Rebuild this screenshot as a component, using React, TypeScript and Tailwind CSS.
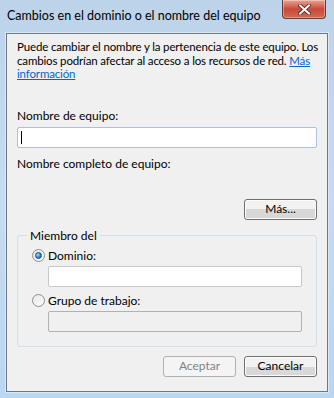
import React from "react";

const font = { fontFamily: 'Lato, "Noto Sans", "DejaVu Sans", sans-serif' };

const Radio = ({ checked }: { checked?: boolean }) => (
  <span className="relative flex h-[13px] w-[13px] items-center justify-center rounded-full border border-[#8e8f8f] bg-gradient-to-br from-[#e6e6e6] to-[#fdfdfd]">
    {checked && (
      <span className="h-[7px] w-[7px] rounded-full border border-[#1b4d76] bg-[radial-gradient(circle_at_35%_35%,#9fe0ff,#2a82c4_60%,#0d4a86)]" />
    )}
  </span>
);

const Button = ({
  label,
  disabled,
}: {
  label: string;
  disabled?: boolean;
}) => (
  <button
    className={
      disabled
        ? "h-[21px] w-[73px] rounded-[3px] border border-[#adb2b5] bg-[#f4f4f4] text-[12px] text-[#838383]"
        : "h-[21px] w-[73px] rounded-[3px] border border-[#707070] bg-gradient-to-b from-[#f2f2f2] from-50% to-[#d8d8d8] to-50% text-[12px] text-black shadow-[inset_0_0_0_1px_#fcfcfc]"
    }
  >
    {label}
  </button>
);

export default function App() {
  return (
    <div
      className="flex h-[398px] w-[334px] flex-col bg-gradient-to-b from-[#bcd3ea] via-[#c6dcf1] to-[#b9d6f2] px-[6px] pb-[6px]"
      style={font}
    >
      {/* Title bar */}
      <div className="flex h-[33px] items-start justify-between">
        <span className="pt-[7px] pl-[1px] text-[12.5px] text-black">
          Cambios en el dominio o el nombre del equipo
        </span>
        <button className="mr-[2px] flex h-[19px] w-[44px] items-center justify-center rounded-b-[4px] border border-t-0 border-[#6b3a33] bg-gradient-to-b from-[#e8a393] via-[#c9493a] to-[#d2684f] shadow-[inset_0_0_0_1px_rgba(255,255,255,0.35)]">
          <svg width="13" height="11" viewBox="0 0 13 11">
            <path
              d="M2 1.5 L11 9.5 M11 1.5 L2 9.5"
              stroke="#3d2a29"
              strokeWidth="3.6"
              strokeLinecap="square"
            />
            <path
              d="M2 1.5 L11 9.5 M11 1.5 L2 9.5"
              stroke="#ffffff"
              strokeWidth="2"
              strokeLinecap="square"
            />
          </svg>
        </button>
      </div>

      {/* Client area */}
      <div className="flex flex-1 flex-col border border-[#6c7885] bg-[#f0f0f0] px-[10px] pt-[6px] text-[12px] leading-[14px] text-black shadow-[0_0_0_1px_#dbe7f3]">
        <p className="whitespace-nowrap text-[11.5px] leading-[13.5px] tracking-[-0.15px]">
          Puede cambiar el nombre y la pertenencia de este equipo. Los
          <br />
          cambios podrían afectar al acceso a los recursos de red.{" "}
          <a className="text-[#0066cc] underline">Más</a>
          <br />
          <a className="text-[#0066cc] underline">información</a>
        </p>

        <label className="mt-[28px] block">Nombre de equipo:</label>
        <div className="mt-[4px] flex h-[21px] items-center rounded-[2px] border border-[#abc1de] bg-white px-[3px]">
          <span className="h-[13px] w-px bg-black" />
        </div>

        <label className="mt-[9px] block">Nombre completo de equipo:</label>

        <div className="mt-[28px] flex justify-end">
          <Button label="Más..." />
        </div>

        <fieldset className="mt-[9px] rounded-[3px] border border-[#d5dfe5] px-[14px] pb-[14px]">
          <legend className="ml-[-5px] px-[3px]">Miembro del</legend>
          <div className="mt-[6px] flex items-center gap-[3px]">
            <Radio checked />
            <span>Dominio:</span>
          </div>
          <div className="mt-[3px] ml-[16px] h-[21px] rounded-[2px] border border-[#c5c9cf] bg-white" />
          <div className="mt-[7px] flex items-center gap-[3px]">
            <Radio />
            <span>Grupo de trabajo:</span>
          </div>
          <div className="mt-[3px] ml-[16px] h-[21px] rounded-[2px] border border-[#adb2b5] bg-[#f0f0f0]" />
        </fieldset>

        <div className="mt-[9px] flex justify-end gap-[8px]">
          <Button label="Aceptar" disabled />
          <Button label="Cancelar" />
        </div>
      </div>
    </div>
  );
}
